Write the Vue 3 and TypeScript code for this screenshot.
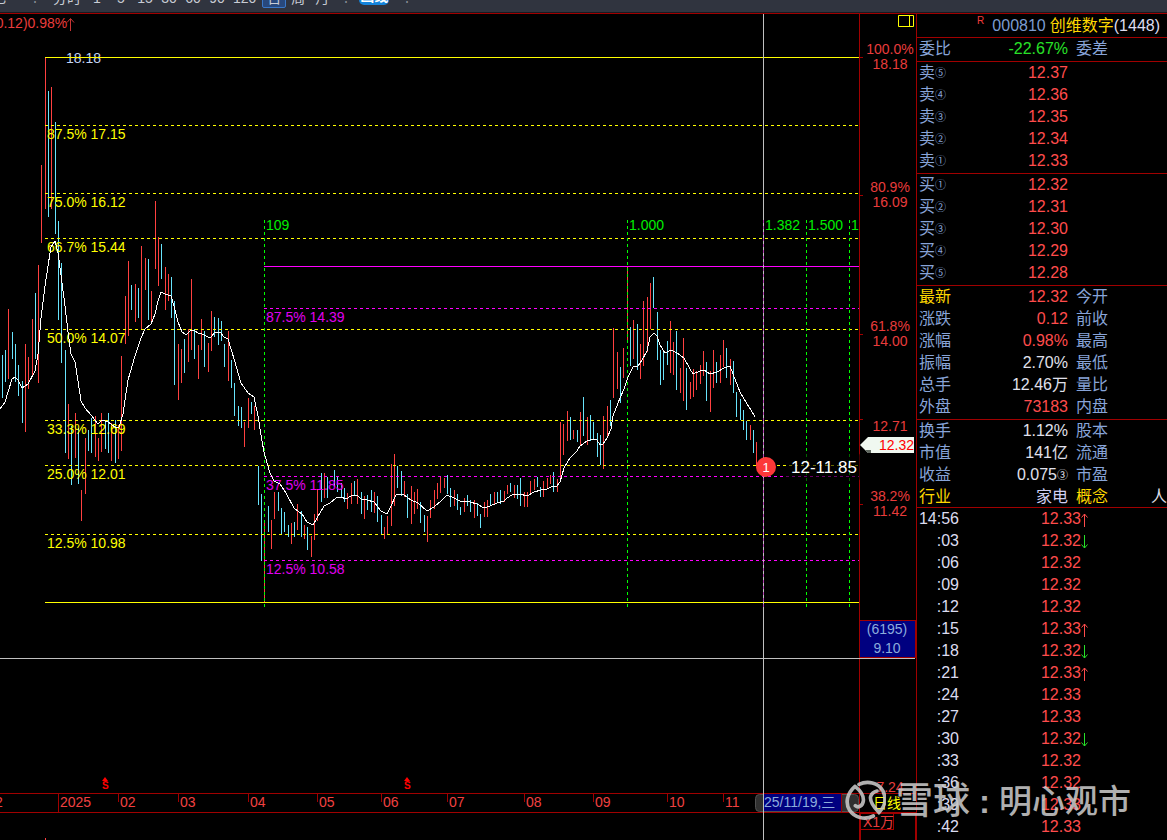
<script setup lang="ts">
type Tone = 'up' | 'down' | 'flat' | 'code' | 'gold' | 'lav'
interface QuoteRow { label: string; value: string; tone: Tone; unit?: string; next?: string; gold?: boolean; edge?: string }
interface Tick { time: string; price: string; dir?: 'up' | 'down' }

// Each entry: x, high, low, direction (r = rising, c = falling)
const barData = `2 355 398 c,5 350 382 c,8 309 379 r,12 332 359 c,15 344 382 c,18 365 396 c,22 381 423 c,25 344 432 r,28 357 389 r,32 319 375 r,35 293 359 c,38 265 383 r,41 165 243 r,45 58 209 r,48 91 217 c,51 87 209 r,55 122 234 c,58 221 320 c,61 263 363 c,65 350 453 c,68 404 459 r,71 426 485 c,75 413 458 r,78 428 484 c,81 490 521 r,85 438 494 r,88 430 451 c,91 418 453 c,95 416 457 r,98 438 461 r,101 413 452 r,105 420 449 c,108 413 453 c,111 423 461 r,115 420 463 c,118 425 459 r,121 356 451 r,125 296 344 r,128 261 336 r,131 285 310 c,135 284 322 r,138 288 318 c,141 246 330 r,145 258 290 r,148 259 320 c,151 291 323 r,155 201 269 r,158 237 286 r,161 244 279 c,165 267 310 r,168 274 301 r,171 277 318 c,174 301 385 c,178 344 400 r,181 349 383 r,184 339 373 c,188 329 362 r,191 279 350 r,194 329 359 c,198 345 379 r,201 319 350 r,204 331 367 c,208 343 372 r,211 311 351 r,214 317 337 c,218 318 345 c,221 321 341 c,224 344 367 c,228 331 381 r,231 360 388 c,234 383 416 c,238 406 426 c,241 407 428 c,244 422 447 r,248 398 428 r,251 402 414 c,254 406 430 r,258 466 505 c,261 494 561 c,264 520 602 r,268 506 532 c,271 520 549 r,274 492 519 r,278 492 511 c,281 508 534 c,284 512 532 c,288 525 537 c,291 523 544 r,294 522 537 c,297 504 530 r,301 511 537 c,304 525 539 r,307 527 550 c,311 536 557 r,314 514 540 r,317 489 521 r,321 473 502 c,324 473 498 r,327 477 498 c,334 470 487 c,337 477 492 c,341 483 498 c,344 488 502 c,347 493 509 r,351 483 504 r,354 481 496 c,357 479 504 r,361 492 514 c,364 496 519 r,367 495 510 c,371 490 512 c,374 492 513 r,377 496 522 c,381 515 535 c,384 527 539 r,387 516 534 r,391 464 526 r,394 454 506 r,397 466 488 c,401 471 496 c,404 481 497 r,407 494 518 c,411 486 524 r,414 492 514 r,417 489 509 r,420 502 523 c,424 515 532 c,427 516 542 r,430 500 518 r,434 490 509 r,437 483 499 r,440 476 493 r,444 478 488 r,447 475 494 c,450 488 507 c,454 490 506 r,457 494 510 c,460 507 515 c,464 498 512 r,467 495 506 c,470 500 512 c,474 500 518 r,477 503 516 c,480 514 528 c,484 502 517 r,487 500 517 r,490 494 505 c,494 492 504 r,497 492 503 c,500 490 504 c,504 491 502 r,507 485 494 r,510 483 492 c,514 485 498 r,517 485 499 c,520 478 506 c,524 492 507 r,527 492 507 r,530 481 493 r,534 479 490 r,537 477 487 c,540 487 497 c,543 481 497 r,547 478 489 r,550 475 484 r,553 472 492 c,557 479 492 r,560 422 482 r,563 424 455 r,567 411 441 r,570 417 440 c,573 430 439 r,577 430 442 c,580 412 445 r,583 397 436 c,587 417 445 r,590 415 441 c,593 422 439 c,597 433 457 c,600 435 465 c,603 416 469 r,607 406 436 r,610 400 426 c,613 328 398 r,617 352 389 r,620 367 403 c,623 348 378 r,627 267 343 r,630 327 366 c,633 320 359 r,637 324 370 c,640 344 379 r,643 301 366 r,647 297 352 r,650 283 329 r,653 277 308 c,657 312 360 c,660 350 385 c,663 352 380 c,667 341 365 c,670 321 373 r,673 342 375 r,676 331 390 c,680 368 393 r,683 338 401 r,686 368 410 c,690 382 399 r,693 369 397 r,696 371 390 r,700 365 384 r,703 351 376 r,706 362 401 c,710 371 412 r,713 350 388 r,716 362 383 c,720 355 383 r,723 340 367 r,726 348 378 c,730 359 385 r,733 361 393 c,736 392 417 c,740 399 420 c,743 410 430 c,746 421 440 c,750 425 440 r,753 430 453 c,756 442 466 r`

const bars = barData.split(',').map((s) => {
  const [x, top, bottom, dir] = s.trim().split(' ')
  return { x: Number(x), top: Number(top), h: Number(bottom) - Number(top), dir }
})

const average = '0,409 5,402 12,379 15,377 18,380 22,388 28,384 35,371 38,354 41,318 45,286 48,266 51,247 55,241 58,253 61,275 65,306 68,332 71,354 75,362 78,381 81,401 85,408 91,415 98,424 102,420 108,422 115,427 119,427 123,414 128,380 135,356 141,338 145,329 151,324 155,314 158,301 161,292 165,294 171,296 174,306 178,322 182,332 186,335 190,331 194,330 198,333 202,334 208,337 211,337 215,332 220,332 224,337 228,339 231,349 235,362 241,383 248,393 254,397 258,416 261,435 264,452 270,473 274,481 280,484 286,493 294,508 302,514 307,522 313,525 317,518 324,506 330,503 336,498 341,497 346,499 351,496 357,495 361,499 367,500 374,502 381,511 387,514 391,506 396,495 403,494 411,500 418,503 427,511 434,507 441,501 447,495 454,498 460,501 470,502 477,504 484,508 490,506 497,503 504,501 507,498 512,495 520,494 527,496 534,492 541,490 547,489 551,487 557,486 560,482 564,468 570,458 577,451 580,446 587,441 593,439 597,440 600,445 603,444 607,438 611,429 613,416 620,398 624,389 628,377 633,367 638,366 642,360 647,351 650,337 654,333 657,336 660,345 665,353 671,350 677,353 684,358 690,369 693,374 700,371 704,370 710,374 717,372 724,368 730,366 733,374 740,392 747,404 751,410 755,417'

const yellowLevels = [
  { y: 125, text: '87.5% 17.15' }, { y: 193, text: '75.0% 16.12' }, { y: 238, text: '66.7% 15.44' },
  { y: 329, text: '50.0% 14.07' }, { y: 420, text: '33.3% 12.69' }, { y: 465, text: '25.0% 12.01' },
  { y: 534, text: '12.5% 10.98' }
]
const magentaLevels = [
  { y: 308, text: '87.5% 14.39' }, { y: 476, text: '37.5% 11.85' }, { y: 560, text: '12.5% 10.58' }
]
const cycles = [
  { x: 264, text: '109' }, { x: 627, text: '1.000' }, { x: 763, text: '1.382' },
  { x: 806, text: '1.500' }, { x: 849, text: '1' }
]
const scale = [
  { y: 57, pct: '100.0%', price: '18.18' }, { y: 195, pct: '80.9%', price: '16.09' },
  { y: 334, pct: '61.8%', price: '14.00' }, { y: 504, pct: '38.2%', price: '11.42' }
]
const months = [
  { x: 58, text: '2025' }, { x: 118, text: '02' }, { x: 178, text: '03' }, { x: 248, text: '04' },
  { x: 317, text: '05' }, { x: 381, text: '06' }, { x: 447, text: '07' }, { x: 524, text: '08' },
  { x: 593, text: '09' }, { x: 667, text: '10' }, { x: 723, text: '11' }
]
const dividends = [102, 404]
const periods = ['分时', '1', '5', '15', '30', '60', '90', '120', '日', '周', '月']

const asks: QuoteRow[] = ['⑤', '④', '③', '②', '①'].map((unit, i) => ({ label: '卖', unit, value: (12.37 - i * 0.01).toFixed(2), tone: 'up' }))
const bids: QuoteRow[] = ['①', '②', '③', '④', '⑤'].map((unit, i) => ({ label: '买', unit, value: (12.32 - i * 0.01).toFixed(2), tone: 'up' }))
const sections: QuoteRow[][] = [
  [{ label: '委比', value: '-22.67%', tone: 'down', next: '委差' }],
  asks,
  bids,
  [
    { label: '最新', value: '12.32', tone: 'up', next: '今开', gold: true },
    { label: '涨跌', value: '0.12', tone: 'up', next: '前收' },
    { label: '涨幅', value: '0.98%', tone: 'up', next: '最高' },
    { label: '振幅', value: '2.70%', tone: 'flat', next: '最低' },
    { label: '总手', value: '12.46万', tone: 'flat', next: '量比' },
    { label: '外盘', value: '73183', tone: 'up', next: '内盘' }
  ],
  [
    { label: '换手', value: '1.12%', tone: 'flat', next: '股本' },
    { label: '市值', value: '141亿', tone: 'flat', next: '流通' },
    { label: '收益', value: '0.075', tone: 'flat', next: '市盈' },
    { label: '行业', value: '家电', tone: 'lav', next: '概念', gold: true, edge: '人' }
  ]
]
const ticks: Tick[] = [
  { time: '14:56', price: '12.33', dir: 'up' }, { time: ':03', price: '12.32', dir: 'down' },
  { time: ':06', price: '12.32' }, { time: ':09', price: '12.32' }, { time: ':12', price: '12.32' },
  { time: ':15', price: '12.33', dir: 'up' }, { time: ':18', price: '12.32', dir: 'down' },
  { time: ':21', price: '12.33', dir: 'up' }, { time: ':24', price: '12.33' }, { time: ':27', price: '12.33' },
  { time: ':30', price: '12.32', dir: 'down' }, { time: ':33', price: '12.32' }, { time: ':36', price: '12.32' },
  { time: ':39', price: '12.33' }, { time: ':42', price: '12.33' }
]
</script>

<template>
  <div class="app">
    <header class="toolbar">
      <div class="tools">
        <span class="lead">色</span>
        <span class="sep">⋮</span>
        <button v-for="p in periods" :key="p" type="button" class="period" :class="{ active: p === '日' }">{{ p }}</button>
        <span class="sep narrow">⋮</span>
        <button type="button" class="badge">画线</button>
        <span class="sep">⋮</span>
      </div>
    </header>

    <div class="body">
      <main class="chart">
        <svg class="canvas" viewBox="0 14 917 826" role="img" aria-label="日线">
          <g class="crisp">
            <rect v-for="b in bars" :key="b.x" :x="b.x" :y="b.top" width="1" :height="b.h" :class="b.dir === 'r' ? 'bar-up' : 'bar-down'" />
            <rect x="45" y="838" width="1" height="2" class="bar-up" />
          </g>

          <text x="66" y="63" class="peak">18.18</text>
          <g class="crisp yellow">
            <path d="M45 57.5H859M45 602.5H859" />
            <path v-for="l in yellowLevels" :key="l.y" :d="`M45 ${l.y}.5H859`" stroke-dasharray="3 3" />
          </g>
          <text v-for="l in yellowLevels" :key="l.text" x="47" :y="l.y + 14" class="t-yellow">{{ l.text }}</text>

          <g class="crisp magenta">
            <path d="M264 266.5H859" />
            <path v-for="l in magentaLevels" :key="l.y" :d="`M264 ${l.y}.5H859`" stroke-dasharray="3 3" />
          </g>
          <text v-for="l in magentaLevels" :key="l.text" x="266" :y="l.y + 14" class="t-magenta">{{ l.text }}</text>

          <g class="crisp green">
            <path v-for="c in cycles" :key="c.x" :d="`M${c.x}.5 220V607`" stroke-dasharray="3 3" />
          </g>
          <text v-for="c in cycles" :key="c.text" :x="c.x + 2" y="230" class="t-green">{{ c.text }}</text>
          <polyline :points="average" class="average crisp" />

          <!-- frame, price scale and time scale -->
          <g class="crisp frame">
            <path d="M859.5 14V812M916.5 14V840M0 793.5H916M0 812.5H916M859 813.5H916M859.5 812V840M860.5 812V840M915.5 812V840" />
            <path v-for="s in scale" :key="s.y" :d="`M859 ${s.y}.5H863`" />
            <path d="M859 419.5H863" />
            <path v-for="(m, i) in months" :key="m.x" :d="`M${m.x}.5 793V${i === 0 ? 812 : 802}`" />
            <path d="M860.5 813.5H893.5V829.5H860.5Z" />
          </g>
          <g class="t-scale">
            <template v-for="s in scale" :key="s.pct">
              <text x="890" :y="s.y - 3" text-anchor="middle">{{ s.pct }}</text>
              <text x="890" :y="s.y + 12" text-anchor="middle">{{ s.price }}</text>
            </template>
            <text x="890" y="431" text-anchor="middle">12.71</text>
            <text x="890" y="792" text-anchor="middle">7.24</text>
            <text x="863" y="827">X1万</text>
            <text x="-9" y="28">(0.12)0.98%</text>
            <path d="M70.5 31V19M67 22.5L70.5 18.5L74 22.5" class="arrow-line" />
          </g>
          <g class="t-time">
            <text x="-5" y="807">2</text>
            <text v-for="m in months" :key="m.text" :x="m.x + 2" y="807">{{ m.text }}</text>
          </g>
          <g v-for="x in dividends" :key="x" class="dividend">
            <path :d="`M${x} 781L${x + 3} 777L${x + 6} 781Z`" />
            <text :x="x" y="789">S</text>
          </g>

          <!-- current price tag -->
          <path d="M860 445L868 437H914V453H868Z" class="tag" />
          <path d="M865 450H871V453H868Z" class="tag-fold" />
          <text x="879" y="450" class="t-tag">12.32</text>

          <!-- crosshair and its read-outs -->
          <rect x="859" y="620" width="57" height="38" class="red-fill" />
          <rect x="860" y="621" width="55" height="36" class="navy" />
          <text x="887" y="634" text-anchor="middle" class="t-blue">(6195)</text>
          <text x="887" y="653" text-anchor="middle" class="t-blue">9.10</text>
          <rect x="755.5" y="794.5" width="103" height="17" rx="4" class="handle" />
          <rect x="763" y="794" width="79" height="17" class="navy" />
          <path d="M841.5 793V812" class="crisp frame" />
          <text x="764" y="807" class="t-blue">25/11/19,三</text>
          <g class="crisp cross">
            <path d="M763.5 14V840M0 658.5H915" />
            <path d="M763.5 220V607" class="cross-mix" stroke-dasharray="3 3" />
          </g>
          <text x="873" y="808" class="t-yellow">日线</text>

          <rect x="786" y="453" width="74" height="28" rx="3" class="note-bg" />
          <circle cx="766" cy="467" r="10" class="note-dot" />
          <text x="766" y="472" text-anchor="middle" class="note-num">1</text>
          <text x="791" y="473" class="note">12-11.85</text>
        </svg>
        <button type="button" class="pane" aria-label="侧栏">
          <svg viewBox="0 0 16 12" width="16" height="12"><path d="M.5.5H15.5V11.5H.5ZM11.5.5V11.5" /></svg>
        </button>
      </main>

      <aside class="quote">
        <h1 class="title"><sup>R</sup><span class="code">000810</span><span class="name">创维数字</span><span>(1448)</span></h1>
        <dl v-for="(sec, i) in sections" :key="i" class="section" :class="{ tight: i === 4 }">
          <div v-for="row in sec" :key="row.label + (row.unit ?? '')" class="row">
            <dt :class="{ gold: row.gold }">{{ row.label }}<small v-if="row.unit">{{ row.unit }}</small></dt>
            <dd :class="row.tone">{{ row.value }}<small v-if="row.label === '收益'">③</small></dd>
            <dt class="next" :class="{ gold: row.edge }">{{ row.next }}</dt>
            <dd class="edge">{{ row.edge }}</dd>
          </div>
        </dl>
        <table class="ticks">
          <tbody>
            <tr v-for="t in ticks" :key="t.time">
              <td class="time">{{ t.time }}</td>
              <td class="price">{{ t.price }}</td>
              <td class="dir">
                <svg v-if="t.dir" viewBox="0 0 7 14" width="7" height="14" :class="t.dir">
                  <path :d="t.dir === 'up' ? 'M3.5 1V14M.5 4.5L3.5 1L6.5 4.5' : 'M3.5 0V13M.5 9.5L3.5 13L6.5 9.5'" />
                </svg>
              </td>
            </tr>
          </tbody>
        </table>
      </aside>
    </div>

    <div class="watermark">
      <svg viewBox="0 0 126 126" width="42" height="42">
        <path d="M45 16C70 4 103 10 117 36C127 58 124 82 105 100C91 86 76 68 80 52C83 44 90 38 99 36" />
        <path d="M33 22C9 43 3 72 17 94C31 116 62 124 88 111M33 22C47 33 60 49 58 66C56 81 43 88 34 80" />
      </svg>
      <span class="brand">雪球</span><span class="colon">:</span><span>明心观市</span>
    </div>
  </div>
</template>

<style>
html, body { background: #000; overflow: hidden; }
</style>

<style scoped>
.app {
  position: relative;
  height: 100vh;
  display: flex;
  flex-direction: column;
  overflow: hidden;
  background: #000;
  color: #dcdcf0;
  font-family: "Liberation Sans", "Noto Sans CJK SC", sans-serif;
  font-size: 16px;
}
button { font: inherit; color: inherit; background: none; border: 0; padding: 0; margin: 0; }

.toolbar { flex: none; height: 12px; overflow: hidden; background: #30343f; border-bottom: 1px solid #181a20; box-shadow: 0 1px #a00000; position: relative; z-index: 1; color: #c8ccd4; font-size: 14px; }
.tools { display: flex; margin: -13px 0 0 -8px; line-height: 20px; }
.lead { flex: none; width: 29px; }
.sep { flex: none; width: 28px; text-align: center; color: #888c96; }
.sep.narrow { width: 24px; }
.period { flex: none; min-width: 24px; padding: 0 4px; height: 21px; line-height: 20px; }
.period.active { margin-left: 2px; padding: 0; border: 1px solid #3a78c8; border-radius: 2px; background: #28487c; }
.badge { flex: none; height: 18px; line-height: 18px; padding: 0 1px; margin: 0 4px 0 1px; border-radius: 5px; background: #1484dc; color: #fff; font-weight: 700; }

.body { flex: 1; min-height: 0; display: flex; padding-top: 1px; }
.chart { position: relative; flex: 1; min-width: 0; }
.canvas { display: block; width: 100%; height: 100%; font-size: 14px; }
.crisp { shape-rendering: crispEdges; fill: none; }
.bar-up { fill: #ff4040; }
.bar-down { fill: #68e4fc; }
.yellow { stroke: #ffff00; }
.magenta { stroke: #ff00ff; }
.green { stroke: #00ff00; }
.average { stroke: #fff; }
.frame { stroke: #a00000; }
.red-fill { fill: #a00000; }
.peak { fill: #c4d4f4; }
.t-yellow { fill: #ffff00; }
.t-magenta { fill: #e000f0; }
.t-green { fill: #00ee00; }
.t-scale { fill: #e83c3c; }
.arrow-line { fill: none; stroke: #c83434; }
.t-time { fill: #f04040; }
.dividend { fill: #ff0000; font-size: 10px; font-weight: 700; }
.tag { fill: #f0f8f0; }
.tag-fold { fill: #606860; }
.t-tag { fill: #ff0000; }
.navy { fill: #000080; }
.t-blue { fill: #8cacdc; }
.handle { fill: #303030; stroke: #505050; }
.cross { stroke: #c0c0c0; }
.cross-mix { stroke: #b040b0; }
.note-bg { fill: #000; fill-opacity: 0.6; }
.note-dot { fill: #fc3838; }
.note-num { fill: #fff; font-size: 13px; }
.note { fill: #fff; font-size: 17px; }
.pane { position: absolute; top: 1px; right: 3px; width: 16px; height: 12px; line-height: 0; }
.pane path { fill: none; stroke: #ffff00; }

.quote { flex: none; width: 250px; overflow: hidden; }
.title { display: flex; justify-content: flex-end; height: 23px; margin: 0; padding-right: 7px; font-size: 16px; font-weight: 400; line-height: 23px; }
.title sup { font-size: 10px; line-height: 13px; color: #f03c3c; margin-right: 8px; }
.title .code { color: #7c9cd0; margin-right: 4px; }
.title .name { color: #ffd800; }
.section { margin: 0; padding-top: 1px; padding-bottom: 1px; box-shadow: inset 0 1px #a00000; }
.section.tight { padding-bottom: 0; }
.row { display: grid; grid-template-columns: 48px 101px 48px 1fr; padding-left: 2px; line-height: 22px; height: 22px; }
.tight .row:last-child { height: 21px; }
dt { color: #88a4d8; white-space: nowrap; }
dd { margin: 0; text-align: right; white-space: nowrap; }
dt.next { padding-left: 8px; }
dt.gold { color: #ffd800; }
small { font-size: 11px; vertical-align: 1px; line-height: 1; }
.up { color: #ff4c4c; }
.down { color: #28e028; }
.flat { color: #e0e0ec; }
.lav { color: #d0d0f4; }
.edge { color: #e0e0ec; }
.ticks { border-collapse: collapse; width: 100%; box-shadow: inset 0 1px #a00000; }
.ticks tr { height: 22px; }
.ticks td { padding: 2px 0 0; line-height: 20px; }
.ticks .time { width: 42px; text-align: right; }
.ticks .price { width: 122px; text-align: right; color: #ff4c4c; }
.ticks .dir { padding: 4px 0 0; line-height: 0; }
.dir path { fill: none; stroke: currentColor; }

.watermark { position: absolute; right: 36px; bottom: 17px; display: flex; align-items: center; height: 46px; color: #c8c8c8; opacity: 0.88; font-size: 33px; line-height: 46px; font-weight: 500; pointer-events: none; }
.watermark span { padding-top: 4px; }
.watermark svg { margin-right: 10px; }
.watermark path { fill: none; stroke: #c8c8c8; stroke-width: 11; stroke-linecap: round; }
.brand { font-size: 37px; }
.colon { width: 29px; text-align: center; font-weight: 700; }
</style>
